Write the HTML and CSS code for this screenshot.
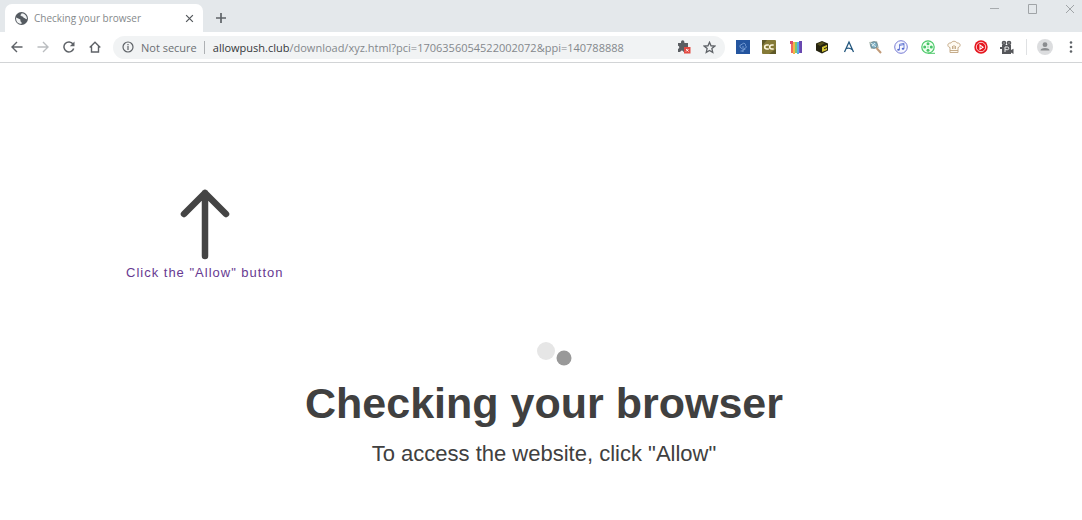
FILE: index.html
```html
<!DOCTYPE html>
<html lang="en">
<head>
<meta charset="utf-8">
<title>Checking your browser</title>
<link rel="stylesheet" href="styles.css">
</head>
<body>
<header class="chrome">
  <div class="tabstrip">
    <div class="tab">
      <svg class="favicon" viewBox="0 0 12 12"><circle cx="6" cy="6" r="6" fill="#545a60"/><path d="M1 5l2 1 2 1v1.500l1 1v1.500C3 11 1 9 1 6zM6 1.200c.3 1-1 1-1 2 1 0 1 1 2 1s.4 1.300 1.500 1.300S9.600 7 11 6.500C11.200 4 9 1 6 1.200z" fill="#f2f4f5"/></svg>
      <span class="tab-title">Checking your browser</span>
      <button class="tab-close" aria-label="Close tab"><svg viewBox="0 0 8 8"><path d="M1 1l6 6M7 1l-6 6" stroke="#54585c" stroke-width="1.100"/></svg></button>
    </div>
    <button class="new-tab" aria-label="New tab"><svg viewBox="0 0 10 10"><path d="M5 0v10M0 5h10" stroke="#5f6368" stroke-width="1.700"/></svg></button>
    <div class="window-controls">
      <button aria-label="Minimize"><svg viewBox="0 0 10 10"><path d="M1 4.500h9" stroke="#a7abae"/></svg></button>
      <button aria-label="Maximize"><svg viewBox="0 0 10 10"><path d="M1.500.5h8v9h-8z" fill="none" stroke="#a0a4a7"/></svg></button>
      <button aria-label="Close"><svg viewBox="0 0 10 10"><path d="M1 1l8 8M9 1l-8 8" stroke="#a0a4a7"/></svg></button>
    </div>
  </div>
  <div class="toolbar">
    <nav class="nav">
      <button aria-label="Back"><svg viewBox="0 0 12 12"><path d="M11.500 6H1.500M6 1L1 6l5 5" fill="none" stroke="#5f6368" stroke-width="1.400"/></svg></button>
      <button aria-label="Forward"><svg viewBox="0 0 12 12"><path d="M.5 6h10M6 1l5 5-5 5" fill="none" stroke="#babdc0" stroke-width="1.400"/></svg></button>
      <button aria-label="Reload"><svg viewBox="0 0 12 12"><path d="M10 3A5 5 0 1 0 10.700 7.500" fill="none" stroke="#5f6368" stroke-width="1.500"/><path d="M11.500.5v4.700H6.800z" fill="#5f6368"/></svg></button>
      <button aria-label="Home"><svg viewBox="0 0 12 12"><path d="M.7 6.500L6 1.200l5.300 5.300M2.500 5v6h7V5" fill="none" stroke="#5f6368" stroke-width="1.400"/></svg></button>
    </nav>
    <div class="omnibox">
      <svg class="info" viewBox="0 0 12 12"><circle cx="6" cy="6" r="5" fill="none" stroke="#5f6368" stroke-width="1.200"/><path d="M6 5v4M6 3v1.200" stroke="#5f6368" stroke-width="1.200"/></svg>
      <span class="secure">Not secure</span>
      <span class="url"><span class="host">allowpush.club</span>/download/xyz.html?pci=1706356054522002072&amp;ppi=140788888</span>
      <button class="blocked" aria-label="Blocked plug-in"><svg viewBox="0 0 14 14"><path d="M1 3h3V2a1.700 1.700 0 0 1 3.400 0v1H11v4.500h-3V12H6.500a1.600 1.600 0 0 0-3.200 0H1V9a1.700 1.700 0 0 0 0-3.300z" fill="#5b5e62"/><path d="M7 7h6.500v6.500H7z" fill="#e24b43"/><path d="M9 9l2.500 2.500M11.500 9L9 11.500" stroke="#fff" stroke-width=".9"/></svg></button>
      <button class="star" aria-label="Bookmark"><svg viewBox="0 0 12 12"><path d="M6 1.200l1.400 3.200 3.500.3-2.700 2.300.8 3.500L6 8.700l-3 1.800.8-3.500L1.100 4.700l3.500-.3z" fill="none" stroke="#5f6368" stroke-width="1.200"/></svg></button>
    </div>
    <div class="extensions">
      <button aria-label="Blue extension"><svg viewBox="0 0 14 14"><path d="M0 0h14v14H0z" fill="#24559f"/><path d="M6 8.500C3 8 3.500 4 6 4.500c.5-2 4-1.500 3.500 1 1.500 1 .5 3-1.500 3M7 6v6M7 10l2.500-1M7 11H4.500" fill="none" stroke="#88acdf" stroke-width=".8"/></svg></button>
      <button aria-label="CC"><svg viewBox="0 0 14 14"><rect width="14" height="14" rx="1" fill="#857a37"/><path d="M0 0h5L0 6zM14 14H7l7-5z" fill="#5f5928"/><path d="M6.800 5H5Q2.700 5 2.700 7T5 9h1.800M11.700 5H10Q7.700 5 7.700 7T10 9h1.700" fill="none" stroke="#fff8df" stroke-width="1.600"/></svg></button>
      <button aria-label="Color bars"><svg viewBox="0 0 14 14"><path d="M2 2h2v11H2z" fill="#ef6b5e"/><path d="M4 2h2v12H4z" fill="#f5b548"/><path d="M6 2h2v11H6z" fill="#7cc872"/><path d="M8 2h2v12H8z" fill="#58aee8"/><path d="M10 2h2v11h-2z" fill="#8058c8"/><path d="M1 1h3v3H1z" fill="#d84b68"/><path d="M10 1h3v12h-2z" fill="#6948b0"/></svg></button>
      <button aria-label="Cube"><svg viewBox="0 0 14 14"><path d="M7 1l6 2.500v7L7 13.500l-6-3v-7z" fill="#25230f"/><path d="M2 4l5-2 3 1-5 3z" fill="#56501a"/><path d="M7 7l5-2v2L9 8.300v1L12 8v2l-5 2z" fill="#d2c336"/></svg></button>
      <button aria-label="Letter A"><svg viewBox="0 0 14 14"><path d="M2.500 12L7 2l4.500 10M4.500 8.500c2-.8 3.500-.5 5.500 1" fill="none" stroke="#23577e" stroke-width="1.300"/></svg></button>
      <button aria-label="Search images"><svg viewBox="0 0 14 14"><path d="M1 2l8-1 2 7-8 1z" fill="#b8c5bd"/><circle cx="6" cy="5" r="3.300" fill="#83b6cb" stroke="#5f7880" stroke-width=".8"/><path d="M3 3l5 4M7 3L4 6" stroke="#dceaea"/><path d="M8.500 8l4.500 5" stroke="#c19a78" stroke-width="2"/></svg></button>
      <button aria-label="Music"><svg viewBox="0 0 14 14"><circle cx="7" cy="7" r="6.300" fill="#f7f8ff" stroke="#777bd4" stroke-width="1"/><path d="M5.500 9.500V4.300l4.500-1v5.200M5.500 5.500l4.500-1" fill="none" stroke="#5267ce" stroke-width=".8"/><ellipse cx="4.500" cy="9.700" rx="1.300" ry="1" fill="#5267ce"/><ellipse cx="9" cy="8.800" rx="1.300" ry="1" fill="#5267ce"/></svg></button>
      <button aria-label="Film reel"><svg viewBox="0 0 14 14"><circle cx="7" cy="7" r="6.200" fill="#efffef" stroke="#4cc96a" stroke-width="1.200"/><g fill="#48c569"><circle cx="7" cy="3.700" r="1.500"/><circle cx="10.300" cy="7" r="1.500"/><circle cx="7" cy="10.300" r="1.500"/><circle cx="3.700" cy="7" r="1.500"/><circle cx="7" cy="7" r=".7"/></g><path d="M7 13.300h7" stroke="#4cc96a"/></svg></button>
      <button aria-label="Chef hat"><svg viewBox="0 0 14 14"><path d="M3 12.500V7.500C0 7 0 2.500 4 3 5 .7 9 .7 10 3c4-.5 4 4 1 4.500v5zM3 10.500h8M5.500 6v3M8.500 6v3M7 5v4" fill="#fffaf1" stroke="#bfa47f" stroke-width=".9"/></svg></button>
      <button aria-label="Video player"><svg viewBox="0 0 14 14"><circle cx="7" cy="7" r="6.700" fill="#e5141c"/><circle cx="7" cy="7" r="4.700" fill="none" stroke="#fff" stroke-width=".8"/><path d="M5.500 4l4.500 3.200-4.500 3z" fill="#fff"/><path d="M6.500 6l1.700 1.200-1.700 1z" fill="#df2027"/></svg></button>
      <button aria-label="Movie camera"><svg viewBox="0 0 14 14"><g fill="#55565a"><circle cx="4" cy="3" r="2.300"/><circle cx="9" cy="3" r="2.300"/><path d="M2 5h9v9H2zM11 10l2.500-1.200V14L11 12.500zM0 7h2v2H0z"/></g><circle cx="4" cy="3" r=".7" fill="#bbb"/><circle cx="9" cy="3" r=".7" fill="#bbb"/><path d="M5 12V7h2.500q1.300 0 1.300 1.300T7.500 9.700H5" fill="none" stroke="#eee"/></svg></button>
    </div>
    <div class="profile">
      <button aria-label="Profile"><svg viewBox="0 0 16 16"><circle cx="8" cy="8" r="8" fill="#dcdddf"/><circle cx="8" cy="5.700" r="2.400" fill="#8b8d90"/><path d="M3.500 11.500q0-2.500 4.500-2.500t4.500 2.500z" fill="#8b8d90"/></svg></button>
      <button class="more" aria-label="Menu"><svg viewBox="0 0 4 12"><g fill="#5f6368"><circle cx="2" cy="1.500" r="1.300"/><circle cx="2" cy="6" r="1.300"/><circle cx="2" cy="10.500" r="1.300"/></g></svg></button>
    </div>
  </div>
</header>
<main class="page">
  <a class="hint" href="#allow">
    <svg viewBox="0 0 50 72"><path d="M25 68V5M4 26L25 5l21 21" fill="none" stroke="#444" stroke-width="6.500" stroke-linecap="round" stroke-linejoin="round"/></svg>
    <span>Click the "Allow" button</span>
  </a>
  <section class="check">
    <svg class="loader" viewBox="0 0 36 26"><circle cx="10" cy="10" r="9" fill="#e6e6e6"/><circle cx="28" cy="17" r="7.500" fill="#999"/></svg>
    <h1>Checking your browser</h1>
    <p>To access the website, click "Allow"</p>
  </section>
</main>
</body>
</html>
```
FILE: styles.css
```css
* { box-sizing: border-box; }
body {
  margin: 0;
  background: #fff;
  color: #404040;
  font-family: "Liberation Sans", Arial, sans-serif;
}
button {
  display: flex;
  align-items: center;
  justify-content: center;
  padding: 0;
  border: 0;
  background: none;
}
svg { display: block; flex: none; }
.chrome {
  border-bottom: 1px solid #d2d4d6;
  font-family: "Open Sans", "Noto Sans", sans-serif;
}
.tabstrip {
  display: flex;
  height: 32px;
  padding: 4px 7px 0 5px;
  background: #e4e8eb;
}
.tab {
  display: flex;
  align-items: center;
  width: 198px;
  padding: 0 9px 0 10px;
  border-radius: 7px 7px 0 0;
  background: #fff;
}
.favicon { width: 13px; height: 13px; }
.tab-title { flex: 1; margin-left: 6px; font-size: 10px; color: #85898c; }
.tab-close svg { width: 9px; height: 9px; }
.new-tab { margin-left: 13px; }
.new-tab svg { width: 10px; height: 10px; }
.window-controls {
  display: flex;
  align-items: flex-start;
  gap: 28px;
  margin-left: auto;
}
.window-controls svg { width: 10px; height: 10px; }
.toolbar {
  display: flex;
  align-items: center;
  height: 30px;
  padding-right: 9px;
}
.nav { display: flex; gap: 14px; padding: 0 12px 0 11px; }
.nav svg { width: 12px; height: 12px; }
.omnibox {
  display: flex;
  flex: 1;
  align-items: center;
  height: 23px;
  padding: 0 9px;
  border-radius: 12px;
  background: #f1f3f4;
  font-size: 11px;
  color: #84888c;
  white-space: nowrap;
}
.info { width: 12px; height: 12px; }
.secure {
  margin-left: 7px;
  padding-right: 7px;
  border-right: 1px solid #aeb1b4;
  line-height: 13px;
  color: #6b6f73;
}
.url { flex: 1; margin-left: 8px; }
.host { color: #35383b; }
.blocked svg { width: 14px; height: 14px; }
.star { margin-left: 12px; }
.star svg { width: 13px; height: 13px; }
.extensions {
  display: flex;
  justify-content: space-between;
  width: 301px;
  padding: 0 12px 0 11px;
}
.extensions svg { width: 14px; height: 14px; }
.profile {
  display: flex;
  align-items: center;
  gap: 16px;
  padding-left: 10px;
  border-left: 1px solid #dfe1e3;
}
.profile svg { width: 16px; height: 16px; }
.profile .more svg { width: 4px; height: 12px; }
.page { padding-top: 125px; }
.hint {
  display: flex;
  flex-direction: column;
  align-items: center;
  width: fit-content;
  margin-left: 126px;
  font-size: 13px;
  line-height: 16px;
  letter-spacing: 1px;
  color: #673a91;
  text-decoration: none;
}
.hint svg { width: 50px; height: 72px; margin-bottom: 5px; }
.check {
  display: flex;
  flex-direction: column;
  align-items: center;
  padding: 60px 0 24px 6px;
  text-align: center;
}
.loader { width: 36px; height: 26px; margin-left: 20px; }
h1 { margin: 12px 0 0; font-size: 43px; line-height: 48px; }
p { margin: 14px 0 0; font-size: 22px; line-height: 26px; }
```
